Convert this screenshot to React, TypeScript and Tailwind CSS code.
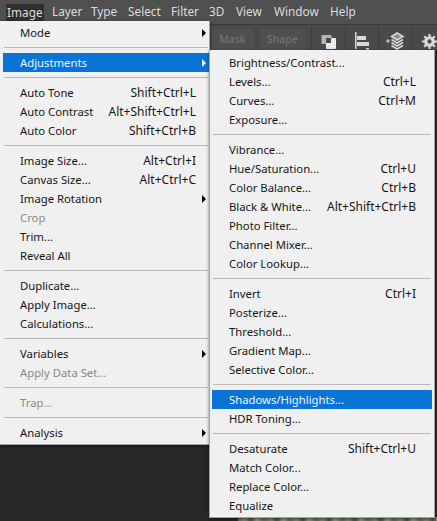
const menuBar = [
  { name: 'Layer', width: 'w-[39px]' },
  { name: 'Type', width: 'w-[37px]' },
  { name: 'Select', width: 'w-[43px]' },
  { name: 'Filter', width: 'w-[38px]' },
  { name: '3D', width: 'w-[27px]' },
  { name: 'View', width: 'w-[38px]' },
  { name: 'Window', width: 'w-[56px]' },
  { name: 'Help', width: 'w-[30px]' },
]

type Item = { label: string; keys?: string; arrow?: boolean; active?: boolean; off?: boolean }

const imageMenu: Item[][] = [
  [{ label: 'Mode', arrow: true }],
  [{ label: 'Adjustments', arrow: true, active: true }],
  [
    { label: 'Auto Tone', keys: 'Shift+Ctrl+L' },
    { label: 'Auto Contrast', keys: 'Alt+Shift+Ctrl+L' },
    { label: 'Auto Color', keys: 'Shift+Ctrl+B' },
  ],
  [
    { label: 'Image Size...', keys: 'Alt+Ctrl+I' },
    { label: 'Canvas Size...', keys: 'Alt+Ctrl+C' },
    { label: 'Image Rotation', arrow: true },
    { label: 'Crop', off: true },
    { label: 'Trim...' },
    { label: 'Reveal All' },
  ],
  [{ label: 'Duplicate...' }, { label: 'Apply Image...' }, { label: 'Calculations...' }],
  [{ label: 'Variables', arrow: true }, { label: 'Apply Data Set...', off: true }],
  [{ label: 'Trap...', off: true }],
  [{ label: 'Analysis', arrow: true }],
]

const adjustMenu: Item[][] = [
  [
    { label: 'Brightness/Contrast...' },
    { label: 'Levels...', keys: 'Ctrl+L' },
    { label: 'Curves...', keys: 'Ctrl+M' },
    { label: 'Exposure...' },
  ],
  [
    { label: 'Vibrance...' },
    { label: 'Hue/Saturation...', keys: 'Ctrl+U' },
    { label: 'Color Balance...', keys: 'Ctrl+B' },
    { label: 'Black & White...', keys: 'Alt+Shift+Ctrl+B' },
    { label: 'Photo Filter...' },
    { label: 'Channel Mixer...' },
    { label: 'Color Lookup...' },
  ],
  [
    { label: 'Invert', keys: 'Ctrl+I' },
    { label: 'Posterize...' },
    { label: 'Threshold...' },
    { label: 'Gradient Map...' },
    { label: 'Selective Color...' },
  ],
  [{ label: 'Shadows/Highlights...', active: true }, { label: 'HDR Toning...' }],
  [
    { label: 'Desaturate', keys: 'Shift+Ctrl+U' },
    { label: 'Match Color...' },
    { label: 'Replace Color...' },
    { label: 'Equalize' },
  ],
]

const Row = ({ item, right }: { item: Item; right: string }) => (
  <div
    className={`flex h-[19px] items-center justify-between pt-px pl-[17px] ${right} ${
      item.active ? 'bg-[#0a74d6] text-[#eef6ff]' : item.off ? 'text-[#8a8a8a]' : 'text-[#161616]'
    }`}
  >
    <span className="text-[11.3px]">{item.label}</span>
    {item.keys && <span className="text-[12px]">{item.keys}</span>}
    {item.arrow && (
      <svg width="4" height="8" viewBox="0 0 4 8" className="-mr-[10px]">
        <path d="M0 0L4 4L0 8Z" fill={item.active ? '#eef6ff' : '#000'} />
      </svg>
    )}
  </div>
)

const Menu = ({ groups, right }: { groups: Item[][]; right: string }) => (
  <>
    {groups.map((group, i) => (
      <div key={i}>
        {i > 0 && (
          <div className="flex h-[11px] items-center px-px">
            <div className="h-px w-full bg-[#b9b9b9]" />
          </div>
        )}
        {group.map((item) => (
          <Row key={item.label} item={item} right={right} />
        ))}
      </div>
    ))}
  </>
)

const ToolIcons = () => (
  <div className="ml-[6px] flex h-[24px] flex-1 items-end">
    <div className="flex h-full w-[34px] items-end justify-center border-l border-[#3d3d3d]">
      <svg width="16" height="16" viewBox="0 0 16 16">
        <rect x="0.5" y="1" width="10" height="9" rx="1" fill="#b5b5b5" />
        <rect x="5" y="4" width="10" height="11" rx="1" fill="#ececec" />
        <rect x="5" y="4" width="5" height="5" fill="#4a4a4a" />
      </svg>
    </div>
    <div className="flex h-full w-[33px] items-end justify-center border-l border-[#3d3d3d]">
      <svg width="16" height="18" viewBox="0 0 16 18">
        <rect x="1" y="0" width="1.5" height="17" fill="#d8d8d8" />
        <rect x="3" y="4" width="9" height="4" fill="#d8d8d8" />
        <rect x="3" y="10" width="12" height="4" fill="#d8d8d8" />
        <rect x="12" y="16" width="3" height="1.5" fill="#d8d8d8" />
      </svg>
    </div>
    <div className="flex h-full w-[34px] items-end justify-center border-l border-[#3d3d3d]">
      <svg width="19" height="18" viewBox="0 0 19 18" fill="none" stroke="#d8d8d8" strokeWidth="1.5">
        <path d="M11 1L17 4.5L11 8L5.5 4.5Z" fill="#8f8f8f" />
        <path d="M5.5 7.5L11 11L17 7.5" />
        <path d="M5.5 10.5L11 14L17 10.5" />
        <path d="M5.5 13.5L11 17L17 13.5" />
        <path d="M0 9H4M2 7V11" strokeWidth="1" />
      </svg>
    </div>
    <div className="flex h-full flex-1 items-end border-l border-[#3d3d3d] pb-[1px] pl-[9px]">
      <svg width="15" height="15" viewBox="0 0 14 14" className="shrink-0">
        <circle cx="7" cy="7" r="3.5" fill="none" stroke="#dcdcdc" strokeWidth="3" />
        <path d="M7 0V3M7 11V14M0 7H3M11 7H14M2 2L4 4M10 10L12 12M12 2L10 4M4 10L2 12" stroke="#dcdcdc" strokeWidth="2" />
      </svg>
    </div>
  </div>
)

export default function App() {
  return (
    <div className="relative flex h-[521px] w-[437px] flex-col overflow-hidden bg-[#282828] font-['Noto_Sans',sans-serif] text-[12px] leading-none">
      <div className="flex h-[24px] items-start bg-[#505050] pl-[6px] text-[11.8px] text-[#dcdcdc]">
        <div className="mt-[4px] mr-[8px] flex h-[18px] w-[38px] items-center bg-[#303030] pl-px">Image</div>
        {menuBar.map((item) => (
          <div key={item.name} className={`flex h-[22px] items-center pt-[2px] ${item.width}`}>
            {item.name}
          </div>
        ))}
      </div>
      <div className="flex h-[26px] items-end border-t border-[#3b3b3b] bg-[#4a4a4a] pl-[212px] text-[10.5px] text-[#777777]">
        <div className="flex h-[22px] w-[43px] items-center justify-center bg-[#4f4f4f]">Mask</div>
        <div className="ml-[7px] flex h-[22px] w-[48px] items-center justify-center bg-[#4f4f4f]">Shape</div>
        <ToolIcons />
      </div>
      <div className="flex-1" />
      <div className="ml-[238px] h-[4px] bg-[repeating-linear-gradient(90deg,#5c6b4c_0,#7f8a70_7px,#47503c_13px,#969b88_19px,#5c6b4c_26px)]" />

      <div className="absolute top-[21px] left-0 w-[210px] border-r border-b border-[#a3a3a3] bg-[#f0f0f0] pt-[2px] pb-[2px] pl-[3px] shadow-[0_1px_3px_rgba(0,0,0,0.5)]">
        <Menu groups={imageMenu} right="pr-[13px]" />
      </div>
      <div className="absolute top-[50px] left-[209px] w-[226px] border-x border-b border-[#a3a3a3] bg-[#f0f0f0] px-[2px] pt-[3px] pb-[2px] shadow-[0_1px_3px_rgba(0,0,0,0.5)]">
        <Menu groups={adjustMenu} right="pr-[16px]" />
      </div>
    </div>
  )
}
